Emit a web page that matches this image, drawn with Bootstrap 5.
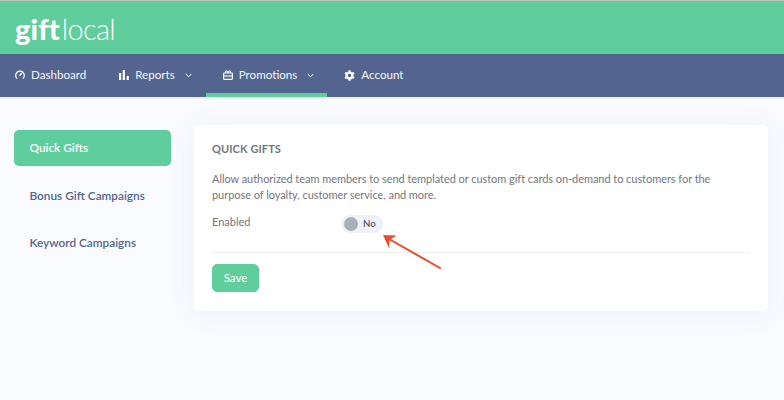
<!DOCTYPE html>
<html lang="en">
<head>
<meta charset="utf-8">
<title>Quick Gifts</title>
<link href="https://cdn.jsdelivr.net/npm/bootstrap@5.3.0/dist/css/bootstrap.min.css" rel="stylesheet">
<style>
html,body{height:100%}
body{background:#fafbff;font-family:"Lato","Open Sans",sans-serif;font-size:11px;color:#73767f;overflow:hidden;position:relative;height:400px}
.top-strip{height:54px;background:#5fcd9c;border-top:1px solid #b9c4bd;padding:0 15px}
.brand-mark{font-size:29px;line-height:1;color:#fff;font-weight:300;letter-spacing:-.7px;margin-top:13px}
.brand-mark b{font-weight:900;letter-spacing:.1px;margin-right:2px}
.main-nav{height:43px;background:#53658f;box-shadow:0 1px 2px rgba(83,101,143,.15)}
.main-link{color:#f4f5f9;font-size:11.6px;font-weight:400;border-bottom:4px solid transparent;border-top:3px solid transparent;text-decoration:none;gap:6px;height:43px}
.pad-a{padding:0 15px}
.pad-b{padding:0 14px 0 18px}
.pad-c{padding:0 13px 0 17px}
.pad-d{padding:0 15px 0 17px}
.main-link.on{border-bottom-color:#5fcd9c}
.main-link .chev{margin-left:4px}
.side-col{width:157px;margin-left:14px;margin-top:33px}
.side-link{height:36px;padding:0 15.5px;border-radius:5px;color:#53658f;font-size:11.8px;font-weight:600;text-decoration:none;margin-bottom:11.5px}
.side-link.on{background:#5fcd9c;color:#fff}
.panel{width:574px;height:186px;margin:28px 0 0 23px;background:#fff;border-radius:5px;padding:16.5px 18px 0;box-shadow:0 2px 30px rgba(83,101,143,.07)}
.panel-title{font-size:11px;font-weight:700;letter-spacing:.1px;color:#73767f;line-height:14px;margin-bottom:15.5px}
.panel-copy{line-height:15.5px;margin-bottom:14px;letter-spacing:-.05px}
.field-row{height:27px}
.field-label{width:129px;margin-top:-2px}
.switch-pill{width:42px;height:18px;background:#f1f2f7;border-radius:9px;padding-left:3px;gap:5px;font-size:9.6px;font-weight:600;color:#555a66;margin-top:-1px}
.switch-knob{width:14px;height:14px;border-radius:50%;background:#aab0ba}
.rule-line{height:1px;background:#eef0f6;margin:9px 0 11px}
.save-btn{width:47px;height:28px;padding:0;background:#5fcd9c;border:1px solid #5fcd9c;border-radius:5px;color:#fff;font-size:11.5px;font-weight:400}
.note-arrow{position:absolute;left:379px;top:230px}
</style>
</head>
<body>
<div class="top-strip">
  <div class="brand-mark"><b>gift</b>local</div>
</div>
<nav class="main-nav d-flex">
  <a class="main-link pad-a d-flex align-items-center" href="#">
    <svg width="10" height="10" viewBox="0 0 10 10" fill="none" stroke="#fff" stroke-width="1.2"><path d="M2 8.6A4.3 4.3 0 1 1 8 8.6"/><path d="M4.6 5.8 6.8 3" stroke-width="1.5"/></svg>
    Dashboard</a>
  <a class="main-link pad-b d-flex align-items-center" href="#">
    <svg width="10" height="10" viewBox="0 0 10 10" fill="#fff"><rect x="0" y="3" width="2.2" height="7"/><rect x="3.7" y="0" width="2.2" height="10"/><rect x="7.6" y="6" width="2.2" height="4"/></svg>
    Reports
    <svg class="chev" width="7" height="5" viewBox="0 0 7 5" fill="none" stroke="#fff" stroke-width="1"><path d="M.7 1 3.5 3.8 6.3 1"/></svg></a>
  <a class="main-link pad-c on d-flex align-items-center" href="#">
    <svg width="10" height="10" viewBox="0 0 10 10" fill="none" stroke="#fff" stroke-width="1.2"><rect x=".6" y="3" width="8.8" height="6.4" rx=".8"/><path d="M.6 6h8.8" stroke-width="1.1"/><path d="M2.5 3V1h1.6l.9 2 .9-2h1.6v2" stroke-width="1"/></svg>
    Promotions
    <svg class="chev" width="7" height="5" viewBox="0 0 7 5" fill="none" stroke="#fff" stroke-width="1"><path d="M.7 1 3.5 3.8 6.3 1"/></svg></a>
  <a class="main-link pad-d d-flex align-items-center" href="#">
    <svg width="11" height="11" viewBox="0 0 11 11"><circle cx="5.5" cy="5.5" r="2.9" fill="none" stroke="#fff" stroke-width="2.4"/><path d="M5.5.3v2.2M5.5 8.5v2.2M1 2.9l1.9 1.1M8.1 7l1.9 1.1M1 8.1l1.9-1.1M8.1 4 10 2.9" stroke="#fff" stroke-width="2.2"/></svg>
    Account</a>
</nav>
<div class="d-flex">
  <div class="side-col">
    <a class="side-link on d-flex align-items-center" href="#">Quick Gifts</a>
    <a class="side-link d-flex align-items-center" href="#">Bonus Gift Campaigns</a>
    <a class="side-link d-flex align-items-center" href="#">Keyword Campaigns</a>
  </div>
  <div class="panel">
    <div class="panel-title">QUICK GIFTS</div>
    <p class="panel-copy">Allow authorized team members to send templated or custom gift cards on-demand to customers for the purpose of loyalty, customer service, and more.</p>
    <div class="field-row d-flex">
      <div class="field-label">Enabled</div>
      <div class="switch-pill d-flex align-items-center"><span class="switch-knob"></span>No</div>
    </div>
    <div class="rule-line"></div>
    <button class="save-btn" type="button">Save</button>
  </div>
</div>
<svg class="note-arrow" width="66" height="42" viewBox="0 0 66 42" fill="none"><path d="M61 38 10 9" stroke="#ee4a2a" stroke-width="2" stroke-linecap="round"/><path d="M4 5 17.5 5.5 10.5 10 10 18Z" fill="#ee4a2a"/></svg>
<script src="https://cdn.jsdelivr.net/npm/bootstrap@5.3.0/dist/js/bootstrap.bundle.min.js"></script>
</body>
</html>
